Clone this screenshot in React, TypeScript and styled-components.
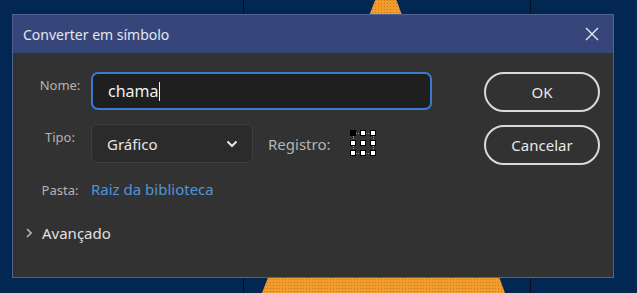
import styled, { createGlobalStyle } from "styled-components";

const GlobalStyle = createGlobalStyle`
  html, body {
    margin: 0;
    padding: 0;
    background: #022752;
    font-family: "Noto Sans", "Open Sans", sans-serif;
  }
`;

const Desktop = styled.div`
  position: relative;
  width: 637px;
  height: 293px;
  overflow: hidden;
  background: #022752;
`;

const Backdrop = styled.svg`
  position: absolute;
  left: 0;
  top: 0;
`;

const Dialog = styled.div`
  position: absolute;
  left: 12px;
  top: 14px;
  width: 600px;
  height: 262px;
  border: 1px solid #52628f;
  background: #323232;
  display: flex;
  flex-direction: column;
`;

const TitleBar = styled.div`
  height: 38px;
  flex: none;
  background: #37467a;
  display: flex;
  align-items: center;
  justify-content: space-between;
  padding: 0 13px 0 10px;
  color: #e4e6ee;
  font-size: 14px;
`;

const CloseButton = styled.button`
  width: 16px;
  height: 16px;
  padding: 0;
  border: none;
  background: none;
  display: flex;
  align-items: center;
  justify-content: center;
`;

const Body = styled.div`
  display: flex;
  justify-content: space-between;
  padding: 19px 13px 0 0;
`;

const Form = styled.div`
  display: grid;
  grid-template-columns: 52px auto;
  column-gap: 5px;
  row-gap: 14px;
  padding-left: 21px;
  align-items: start;
`;

const Label = styled.span<{ $top: number }>`
  color: #b4b4b4;
  font-size: 13px;
  text-align: center;
  padding-top: ${(p) => p.$top}px;
`;

const TextInput = styled.div`
  box-sizing: border-box;
  width: 341px;
  height: 38px;
  border: 2px solid #3a7bd0;
  border-radius: 7px;
  background: #1f1f1f;
  display: flex;
  align-items: center;
  padding-left: 15px;
  color: #f0f0f0;
  font-size: 16px;
`;

const Caret = styled.span`
  display: inline-block;
  width: 1px;
  height: 19px;
  background: #f0f0f0;
  margin-left: 1px;
`;

const TypeRow = styled.div`
  display: flex;
  align-items: center;
  height: 39px;
`;

const Select = styled.div`
  box-sizing: border-box;
  width: 162px;
  height: 39px;
  border: 1px solid #3e3e3e;
  border-radius: 6px;
  background: #2b2b2b;
  display: flex;
  align-items: center;
  justify-content: space-between;
  padding: 0 14px 0 15px;
  color: #e6e6e6;
  font-size: 15px;
`;

const InlineLabel = styled.span`
  color: #b4b4b4;
  font-size: 15px;
  margin: 0 20px 0 15px;
`;

const Link = styled.a`
  color: #4f95da;
  font-size: 15px;
  padding-top: 2px;
  text-decoration: none;
`;

const Advanced = styled.div`
  grid-column: 1 / 3;
  display: flex;
  align-items: center;
  gap: 10px;
  margin: 10px 0 0 -8px;
  color: #e0e0e0;
  font-size: 15px;
`;

const Buttons = styled.div`
  display: flex;
  flex-direction: column;
  gap: 13px;
`;

const PillButton = styled.button`
  box-sizing: border-box;
  width: 116px;
  height: 40px;
  border: 2px solid #dadada;
  border-radius: 20px;
  background: transparent;
  color: #e8e8e8;
  font-family: inherit;
  font-size: 15px;
`;

function RegistrationGrid() {
  const pts = [3, 13, 23];
  return (
    <svg width="27" height="27" viewBox="0 0 27 27">
      <g stroke="#9a9a9a" strokeDasharray="1 1" strokeWidth="1">
        <line x1="6" y1="3.5" x2="20" y2="3.5" />
        <line x1="6" y1="23.5" x2="20" y2="23.5" />
        <line x1="3.5" y1="6" x2="3.5" y2="20" />
        <line x1="23.5" y1="6" x2="23.5" y2="20" />
      </g>
      {pts.map((y, r) =>
        pts.map((x, c) => (
          <rect
            key={`${r}-${c}`}
            x={x - 2.5}
            y={y - 2.5}
            width="5"
            height="5"
            fill={r === 0 && c === 0 ? "#000" : "#fff"}
            stroke="#000"
            strokeWidth="1"
          />
        ))
      )}
    </svg>
  );
}

export default function App() {
  return (
    <>
      <GlobalStyle />
      <Desktop>
        <Backdrop width="637" height="293">
          <defs>
            <pattern id="dots" width="3" height="3" patternUnits="userSpaceOnUse">
              <rect width="3" height="3" fill="#f19c2c" />
              <rect width="1" height="1" fill="#c87a20" />
            </pattern>
          </defs>
          <polygon points="386,-28 262,293 505,293" fill="url(#dots)" />
          <line x1="243.5" y1="0" x2="243.5" y2="293" stroke="#0d0d1c" />
          <line x1="530.5" y1="0" x2="530.5" y2="293" stroke="#0d0d1c" />
        </Backdrop>
        <Dialog>
          <TitleBar>
            <span>Converter em símbolo</span>
            <CloseButton>
              <svg width="14" height="14" viewBox="0 0 14 14">
                <path d="M1 1 L13 13 M13 1 L1 13" stroke="#e8e8ee" strokeWidth="1.4" />
              </svg>
            </CloseButton>
          </TitleBar>
          <Body>
            <Form>
              <Label $top={4}>Nome:</Label>
              <TextInput>
                chama
                <Caret />
              </TextInput>
              <Label $top={4}>Tipo:</Label>
              <TypeRow>
                <Select>
                  <span>Gráfico</span>
                  <svg width="12" height="8" viewBox="0 0 12 8">
                    <path d="M1.5 1.5 L6 6 L10.5 1.5" fill="none" stroke="#e6e6e6" strokeWidth="2" />
                  </svg>
                </Select>
                <InlineLabel>Registro:</InlineLabel>
                <RegistrationGrid />
              </TypeRow>
              <Label $top={4}>Pasta:</Label>
              <Link>Raiz da biblioteca</Link>
              <Advanced>
                <svg width="6" height="10" viewBox="0 0 6 10">
                  <path d="M1 1 L5 5 L1 9" fill="none" stroke="#b4b4b4" strokeWidth="1.6" />
                </svg>
                <span>Avançado</span>
              </Advanced>
            </Form>
            <Buttons>
              <PillButton>OK</PillButton>
              <PillButton>Cancelar</PillButton>
            </Buttons>
          </Body>
        </Dialog>
      </Desktop>
    </>
  );
}
